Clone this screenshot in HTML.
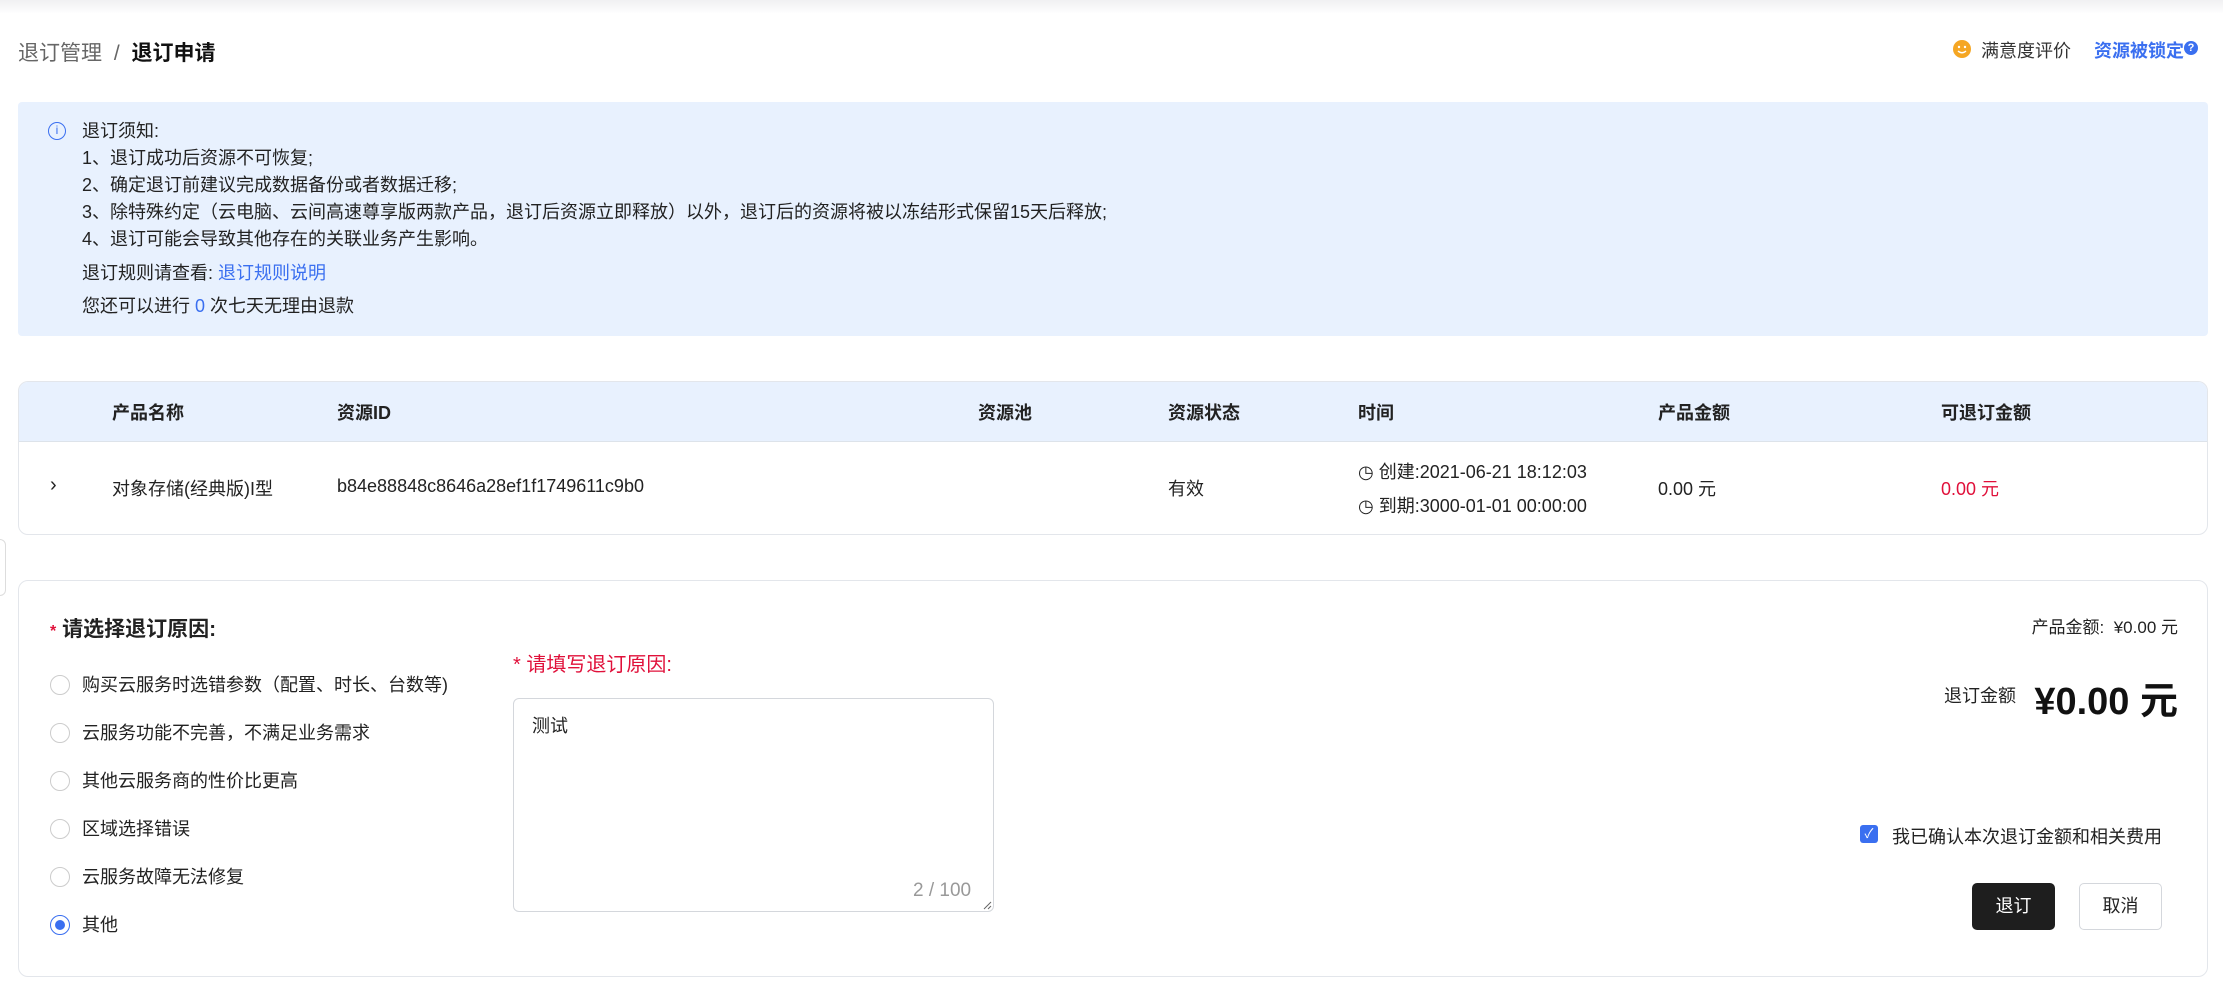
<!DOCTYPE html>
<html><head><meta charset="utf-8"><style>
*{box-sizing:border-box;margin:0;padding:0}
body{width:2223px;height:985px;background:#fff;font-family:"Liberation Sans","Noto Sans CJK SC",sans-serif;color:#222;position:relative;overflow:hidden;font-size:18px}
.a{position:absolute;white-space:nowrap}
.top{position:absolute;left:0;top:0;width:2223px;height:14px;background:linear-gradient(#f0f0f2,#fff)}
.info{position:absolute;left:18px;top:102px;width:2190px;height:234px;background:#e8f1fe;border-radius:4px}
.tbl{position:absolute;left:18px;top:381px;width:2190px;height:154px;border:1px solid #e3e6eb;border-radius:10px;overflow:hidden}
.th{position:absolute;left:0;top:0;width:100%;height:60px;background:#e8f1fe;border-bottom:1px solid #dde3ea}
.card{position:absolute;left:18px;top:580px;width:2190px;height:397px;border:1px solid #e3e6eb;border-radius:10px}
.radio{position:absolute;left:50px;width:20px;height:20px;border:1px solid #ccc;border-radius:50%}
.b{font-weight:bold}
</style></head><body>
<div class="top"></div>
<div class="a" style="left:18px;top:37px;font-size:21px;color:#666">退订管理 <span style="margin:0 6px">/</span> <b style="color:#111">退订申请</b></div>
<svg class="a" style="left:1953px;top:40px" width="18" height="18" viewBox="0 0 18 18"><circle cx="9" cy="9" r="9" fill="#f5a623"/><circle cx="6" cy="7" r="1.2" fill="#fff"/><circle cx="12" cy="7" r="1.2" fill="#fff"/><path d="M5 11 Q9 14.5 13 11" stroke="#fff" stroke-width="1.4" fill="none"/></svg>
<div class="a" style="left:1981px;top:37px;font-size:18px;color:#333">满意度评价</div>
<div class="a b" style="left:2094px;top:37px;font-size:18px;color:#3a6ff0">资源被锁定</div>
<div class="a" style="left:2184px;top:41px;width:14px;height:14px;border-radius:50%;background:#3a6ff0;color:#fff;font-size:11px;text-align:center;line-height:14px;font-weight:bold">?</div>

<div class="info"></div>
<div class="a" style="left:48px;top:122px;width:18px;height:18px;border:1.5px solid #3a6ff0;border-radius:50%;color:#3a6ff0;font-size:12px;text-align:center;line-height:15px">i</div>
<div class="a" style="left:82px;top:118px;font-size:18px;line-height:27px;color:#222">退订须知:<br>1、退订成功后资源不可恢复;<br>2、确定退订前建议完成数据备份或者数据迁移;<br>3、除特殊约定（云电脑、云间高速尊享版两款产品，退订后资源立即释放）以外，退订后的资源将被以冻结形式保留15天后释放;<br>4、退订可能会导致其他存在的关联业务产生影响。</div>
<div class="a" style="left:82px;top:259px;font-size:18px">退订规则请查看: <span style="color:#3a6ff0">退订规则说明</span></div>
<div class="a" style="left:82px;top:292px;font-size:18px">您还可以进行 <span style="color:#3a6ff0">0</span> 次七天无理由退款</div>

<div class="tbl"><div class="th"></div></div>
<div class="a b" style="left:112px;top:399px">产品名称</div>
<div class="a b" style="left:337px;top:399px">资源ID</div>
<div class="a b" style="left:978px;top:399px">资源池</div>
<div class="a b" style="left:1168px;top:399px">资源状态</div>
<div class="a b" style="left:1358px;top:399px">时间</div>
<div class="a b" style="left:1658px;top:399px">产品金额</div>
<div class="a b" style="left:1941px;top:399px">可退订金额</div>
<div class="a" style="left:50px;top:474px;font-size:20px">›</div>
<div class="a" style="left:112px;top:475px">对象存储(经典版)I型</div>
<div class="a" style="left:337px;top:476px">b84e88848c8646a28ef1f1749611c9b0</div>
<div class="a" style="left:1168px;top:475px">有效</div>
<div class="a" style="left:1358px;top:458px">◷ 创建:2021-06-21 18:12:03</div>
<div class="a" style="left:1358px;top:492px">◷ 到期:3000-01-01 00:00:00</div>
<div class="a" style="left:1658px;top:475px">0.00 元</div>
<div class="a" style="left:1941px;top:475px;color:#e0103a">0.00 元</div>

<div class="a" style="left:-6px;top:539px;width:12px;height:57px;border:1px solid #ddd;border-radius:6px;background:#fff"></div>

<div class="card"></div>
<div class="a b" style="left:50px;top:613px;font-size:21px"><span style="color:#e0103a;font-size:16px">*</span> 请选择退订原因:</div>
<div class="radio" style="top:675px"></div><div class="a" style="left:82px;top:671px">购买云服务时选错参数（配置、时长、台数等)</div>
<div class="radio" style="top:723px"></div><div class="a" style="left:82px;top:719px">云服务功能不完善，不满足业务需求</div>
<div class="radio" style="top:771px"></div><div class="a" style="left:82px;top:767px">其他云服务商的性价比更高</div>
<div class="radio" style="top:819px"></div><div class="a" style="left:82px;top:815px">区域选择错误</div>
<div class="radio" style="top:867px"></div><div class="a" style="left:82px;top:863px">云服务故障无法修复</div>
<div class="radio" style="top:915px;border-color:#3a6ff0"><div style="position:absolute;left:4px;top:4px;width:10px;height:10px;border-radius:50%;background:#3a6ff0"></div></div><div class="a" style="left:82px;top:911px">其他</div>
<div class="a" style="left:513px;top:648px;font-size:20px;color:#e0103a">* 请填写退订原因:</div>
<div class="a" style="left:513px;top:698px;width:481px;height:214px;border:1px solid #d4d7dc;border-radius:6px"></div>
<div class="a" style="left:532px;top:712px">测试</div>
<div class="a" style="left:913px;top:880px;color:#999;font-size:19px">2 / 100</div>
<svg class="a" style="left:982px;top:900px" width="10" height="10"><path d="M2 9 L9 2 M6 9 L9 6" stroke="#666" stroke-width="1"/></svg>

<div class="a" style="right:45px;top:613px;font-size:17px">产品金额:&nbsp;&nbsp;¥0.00 元</div>
<div class="a" style="left:1944px;top:682px;font-size:18px">退订金额</div>
<div class="a b" style="right:45px;top:670px;font-size:38px;color:#111">¥0.00 元</div>
<div class="a" style="left:1860px;top:825px;width:18px;height:18px;background:#3a6ff0;border-radius:3px;color:#fff;font-size:13px;text-align:center;line-height:18px">✓</div>
<div class="a" style="left:1892px;top:823px">我已确认本次退订金额和相关费用</div>
<div class="a" style="left:1972px;top:883px;width:83px;height:47px;background:#1e1e1e;border-radius:5px;color:#fff;text-align:center;line-height:47px;font-size:18px">退订</div>
<div class="a" style="left:2079px;top:883px;width:83px;height:47px;border:1px solid #d4d7dc;border-radius:5px;text-align:center;line-height:45px;font-size:18px">取消</div>
</body></html>
